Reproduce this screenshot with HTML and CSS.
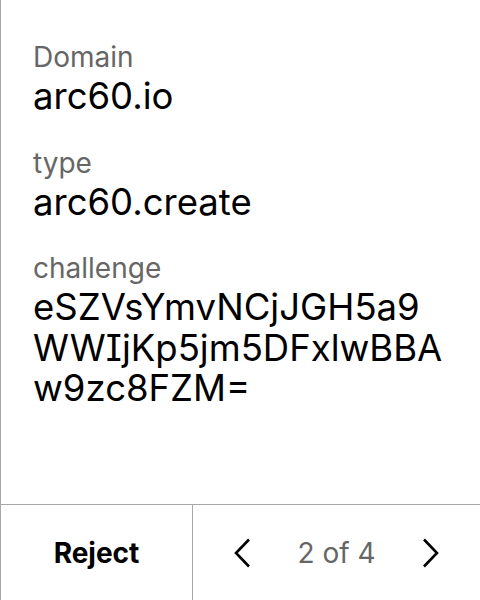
FILE: index.html
```html
<!DOCTYPE html>
<html>
<head>
<meta charset="utf-8">
<link rel="stylesheet" href="styles.css">
</head>
<body>
<div class="panel">
  <div class="content">
    <div class="field">
      <div class="label">Domain</div>
      <div class="value">arc60.io</div>
    </div>
    <div class="field">
      <div class="label">type</div>
      <div class="value">arc60.create</div>
    </div>
    <div class="field">
      <div class="label">challenge</div>
      <div class="value long">eSZVsYmvNCjJGH5a9WWIjKp5jm5DFxlwBBAw9zc8FZM=</div>
    </div>
  </div>
  <div class="footer">
    <div class="reject">Reject</div>
    <div class="pager">
      <svg class="chev" width="18" height="30" viewBox="0 0 18 30"><path d="M16 1.5 L3 15 L16 28.5" fill="none" stroke="#000" stroke-width="2.6"/></svg>
      <span class="count">2 of 4</span>
      <svg class="chev" width="18" height="30" viewBox="0 0 18 30"><path d="M2 1.5 L15 15 L2 28.5" fill="none" stroke="#000" stroke-width="2.6"/></svg>
    </div>
  </div>
</div>
</body>
</html>
```
FILE: styles.css
```css
html, body {
  margin: 0;
  padding: 0;
  background: #fff;
}
body {
  font-family: Inter, "Noto Sans", sans-serif;
  font-feature-settings: "cv08" 1;
  color: #000;
}
.panel {
  width: 479px;
  height: 600px;
  border-left: 1px solid #a8a8a8;
  display: flex;
  flex-direction: column;
}
.content {
  flex: 1;
  padding: 40px 33px 0 32px;
  display: flex;
  flex-direction: column;
  gap: 29px;
}
.field {
  display: flex;
  flex-direction: column;
  gap: 2px;
}
.label {
  font-size: 28px;
  line-height: 34px;
  color: #666;
}
.value {
  font-size: 36.5px;
  line-height: 40.5px;
}
.long {
  word-break: break-all;
}
.footer {
  height: 95px;
  border-top: 1px solid #a8a8a8;
  display: flex;
}
.reject {
  width: 191px;
  border-right: 1px solid #a8a8a8;
  display: flex;
  align-items: center;
  justify-content: center;
  font-size: 28px;
  font-weight: 700;
}
.pager {
  flex: 1;
  display: flex;
  align-items: center;
  justify-content: center;
  gap: 46px;
}
.count {
  font-size: 28px;
  color: #666;
}
```
